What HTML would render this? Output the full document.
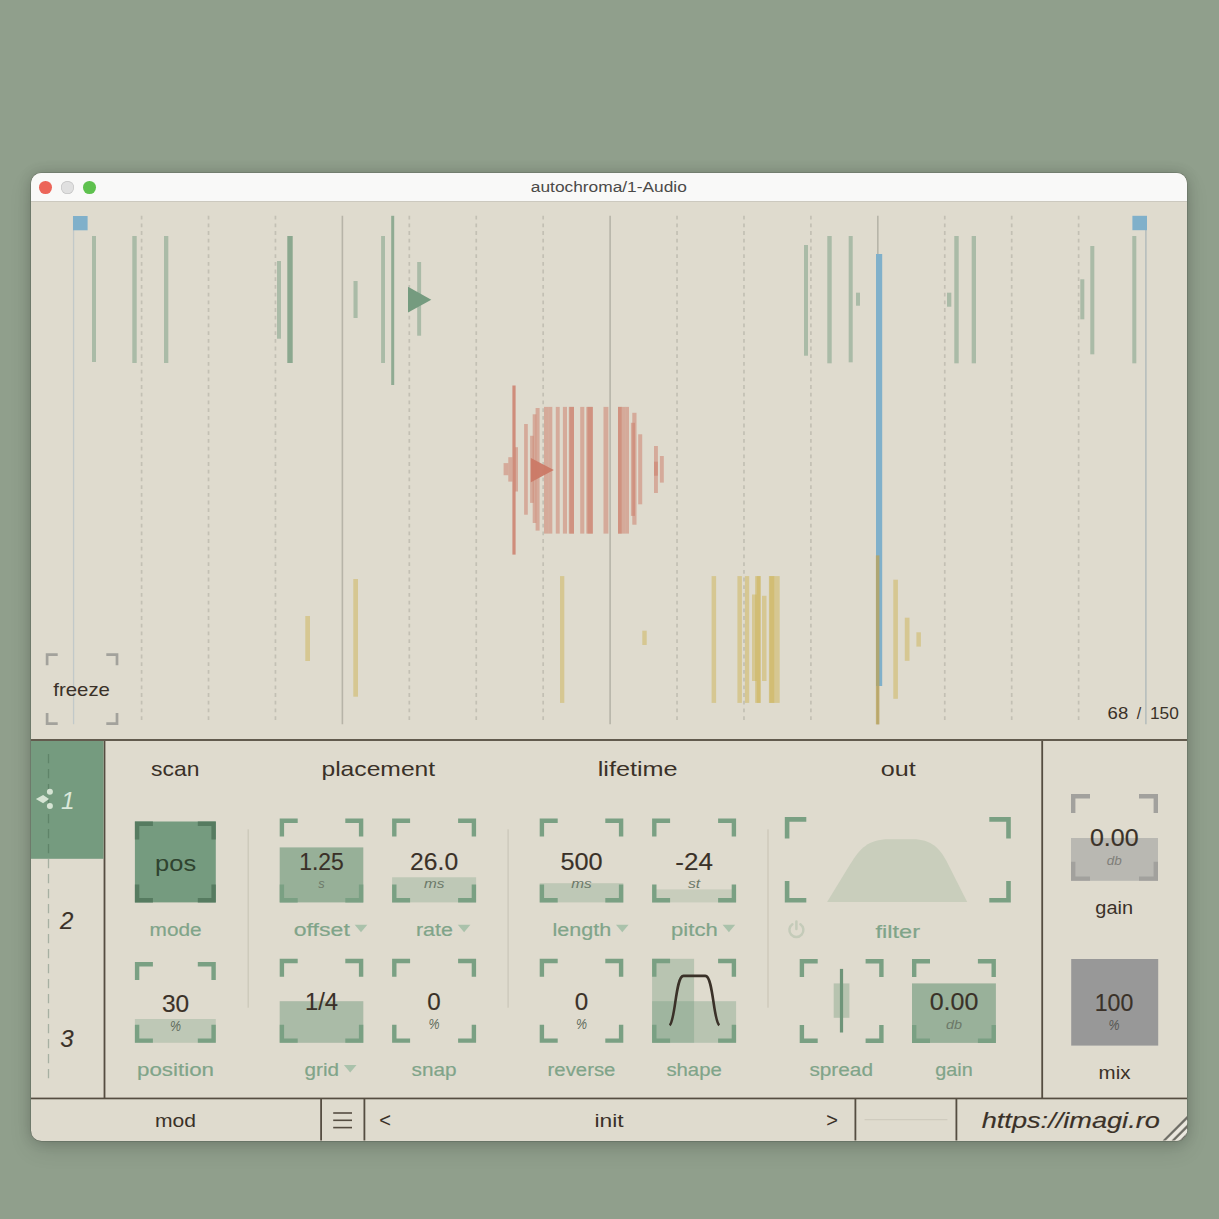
<!DOCTYPE html>
<html lang="en"><head><meta charset="utf-8"><title>autochroma/1-Audio</title>
<style>
html,body{margin:0;padding:0}
body{width:1219px;height:1219px;background:#909f8c;overflow:hidden;position:relative;font-family:"Liberation Sans", sans-serif}
.win{position:absolute;left:31px;top:172.9px;width:1156.2px;height:967.7px;border-radius:10.5px;background:#dfdbce;overflow:hidden;
box-shadow:0 0 0 .5px rgba(0,0,0,.22),0 8px 22px rgba(0,0,0,.13),0 0 13px rgba(0,0,0,.17)}
.bar{position:absolute;left:0;top:0;right:0;height:27.9px;background:#f9f9f8;border-bottom:1.6px solid #ccc9bf}
.dot{position:absolute;top:8.1px;width:12.8px;height:12.8px;border-radius:50%}
svg{position:absolute;left:0;top:0}
svg text{font-family:"Liberation Sans", sans-serif}
</style></head><body>
<div class="win"><div class="bar">
<span class="dot" style="left:7.9px;background:#ec6559"></span>
<span class="dot" style="left:30px;background:#e0e0e0;box-shadow:inset 0 0 0 .7px #c6c6c6"></span>
<span class="dot" style="left:52.4px;background:#5ec14e"></span>
</div></div>
<svg width="1219" height="1219" viewBox="0 0 1219 1219">
<defs><clipPath id="belowtab"><rect x="40" y="858.8" width="20" height="230"/></clipPath>
<clipPath id="win"><rect x="31" y="172.3" width="1156.2" height="968.3" rx="10"/></clipPath></defs>
<text x="608.8" y="192" font-size="15.2" fill="#4b4a48" text-anchor="middle" textLength="156" lengthAdjust="spacingAndGlyphs">autochroma/1-Audio</text>
<line x1="141.6" y1="215.7" x2="141.6" y2="722" stroke="#c3c0b4" stroke-width="1.7" stroke-dasharray="3.8 3.9"/>
<line x1="208.53" y1="215.7" x2="208.53" y2="722" stroke="#c3c0b4" stroke-width="1.7" stroke-dasharray="3.8 3.9"/>
<line x1="275.46000000000004" y1="215.7" x2="275.46000000000004" y2="722" stroke="#c3c0b4" stroke-width="1.7" stroke-dasharray="3.8 3.9"/>
<line x1="342.39" y1="215.7" x2="342.39" y2="724.3" stroke="#b7b4a8" stroke-width="1.6"/>
<line x1="409.32000000000005" y1="215.7" x2="409.32000000000005" y2="722" stroke="#c3c0b4" stroke-width="1.7" stroke-dasharray="3.8 3.9"/>
<line x1="476.25" y1="215.7" x2="476.25" y2="722" stroke="#c3c0b4" stroke-width="1.7" stroke-dasharray="3.8 3.9"/>
<line x1="543.1800000000001" y1="215.7" x2="543.1800000000001" y2="722" stroke="#c3c0b4" stroke-width="1.7" stroke-dasharray="3.8 3.9"/>
<line x1="610.11" y1="215.7" x2="610.11" y2="724.3" stroke="#b7b4a8" stroke-width="1.6"/>
<line x1="677.0400000000001" y1="215.7" x2="677.0400000000001" y2="722" stroke="#c3c0b4" stroke-width="1.7" stroke-dasharray="3.8 3.9"/>
<line x1="743.9700000000001" y1="215.7" x2="743.9700000000001" y2="722" stroke="#c3c0b4" stroke-width="1.7" stroke-dasharray="3.8 3.9"/>
<line x1="810.9000000000001" y1="215.7" x2="810.9000000000001" y2="722" stroke="#c3c0b4" stroke-width="1.7" stroke-dasharray="3.8 3.9"/>
<line x1="877.83" y1="215.7" x2="877.83" y2="724.3" stroke="#b7b4a8" stroke-width="1.6"/>
<line x1="944.7600000000001" y1="215.7" x2="944.7600000000001" y2="722" stroke="#c3c0b4" stroke-width="1.7" stroke-dasharray="3.8 3.9"/>
<line x1="1011.6900000000002" y1="215.7" x2="1011.6900000000002" y2="722" stroke="#c3c0b4" stroke-width="1.7" stroke-dasharray="3.8 3.9"/>
<line x1="1078.6200000000001" y1="215.7" x2="1078.6200000000001" y2="722" stroke="#c3c0b4" stroke-width="1.7" stroke-dasharray="3.8 3.9"/>
<line x1="73.6" y1="216" x2="73.6" y2="724.3" stroke="#c2c9c9" stroke-width="1.3"/>
<line x1="1145.9" y1="216" x2="1145.9" y2="724.3" stroke="#b0babb" stroke-width="1.4"/>
<rect x="73.0" y="216.0" width="14.6" height="14.3" fill="#80b0ca"/>
<rect x="1132.4" y="215.8" width="14.6" height="14.4" fill="#80b0ca"/>
<rect x="92.0" y="236.0" width="4.0" height="126.0" fill="#759b7f" fill-opacity="0.5"/>
<rect x="132.3" y="236.0" width="4.4" height="127.0" fill="#759b7f" fill-opacity="0.5"/>
<rect x="164.0" y="236.0" width="4.3" height="127.0" fill="#759b7f" fill-opacity="0.5"/>
<rect x="277.0" y="261.0" width="4.0" height="77.7" fill="#759b7f" fill-opacity="0.5"/>
<rect x="287.3" y="236.0" width="5.4" height="127.0" fill="#759b7f" fill-opacity="0.8"/>
<rect x="353.5" y="281.0" width="4.1" height="37.0" fill="#759b7f" fill-opacity="0.5"/>
<rect x="381.1" y="236.0" width="3.9" height="127.0" fill="#759b7f" fill-opacity="0.5"/>
<rect x="391.2" y="215.8" width="3.0" height="169.2" fill="#759b7f" fill-opacity="0.75"/>
<rect x="417.2" y="262.0" width="3.9" height="73.7" fill="#759b7f" fill-opacity="0.5"/>
<rect x="804.0" y="245.0" width="4.0" height="110.7" fill="#759b7f" fill-opacity="0.5"/>
<rect x="827.3" y="236.0" width="4.4" height="127.3" fill="#759b7f" fill-opacity="0.5"/>
<rect x="848.7" y="236.0" width="4.0" height="126.3" fill="#759b7f" fill-opacity="0.5"/>
<rect x="856.0" y="292.7" width="4.0" height="13.0" fill="#759b7f" fill-opacity="0.5"/>
<rect x="947.0" y="292.7" width="4.3" height="14.0" fill="#759b7f" fill-opacity="0.5"/>
<rect x="954.3" y="236.0" width="4.4" height="127.3" fill="#759b7f" fill-opacity="0.5"/>
<rect x="971.7" y="236.0" width="4.3" height="127.3" fill="#759b7f" fill-opacity="0.5"/>
<rect x="1080.3" y="279.3" width="4.0" height="40.0" fill="#759b7f" fill-opacity="0.5"/>
<rect x="1090.3" y="246.0" width="4.0" height="108.3" fill="#759b7f" fill-opacity="0.5"/>
<rect x="1132.3" y="236.0" width="4.0" height="127.3" fill="#759b7f" fill-opacity="0.5"/>
<path d="M408 286.8L431.3 299.8L408 312.6z" fill="#759b7f"/>
<rect x="876.0" y="254.0" width="6.2" height="432.0" fill="#80b0ca"/>
<rect x="512.4" y="385.5" width="3.2" height="169.1" fill="#cb7966" fill-opacity="0.8"/>
<rect x="503.6" y="463.1" width="4.7" height="12.1" fill="#cb7966" fill-opacity="0.5"/>
<rect x="508.3" y="457.2" width="4.1" height="24.4" fill="#cb7966" fill-opacity="0.5"/>
<rect x="515.0" y="447.2" width="3.0" height="44.3" fill="#cb7966" fill-opacity="0.5"/>
<rect x="524.1" y="424.0" width="3.7" height="90.7" fill="#cb7966" fill-opacity="0.5"/>
<rect x="530.1" y="435.8" width="3.6" height="67.1" fill="#cb7966" fill-opacity="0.5"/>
<rect x="532.7" y="414.3" width="3.6" height="108.7" fill="#cb7966" fill-opacity="0.5"/>
<rect x="535.6" y="408.0" width="4.0" height="122.6" fill="#cb7966" fill-opacity="0.5"/>
<rect x="544.0" y="406.9" width="4.2" height="126.7" fill="#cb7966" fill-opacity="0.5"/>
<rect x="548.2" y="406.9" width="4.1" height="126.7" fill="#cb7966" fill-opacity="0.5"/>
<rect x="555.8" y="406.9" width="3.9" height="126.7" fill="#cb7966" fill-opacity="0.5"/>
<rect x="562.9" y="406.9" width="4.1" height="126.7" fill="#cb7966" fill-opacity="0.5"/>
<rect x="568.8" y="406.9" width="5.2" height="126.7" fill="#cb7966" fill-opacity="0.5"/>
<rect x="569.5" y="406.9" width="4.5" height="126.7" fill="#cb7966" fill-opacity="0.5"/>
<rect x="580.2" y="406.9" width="4.1" height="126.7" fill="#cb7966" fill-opacity="0.5"/>
<rect x="586.3" y="406.9" width="6.5" height="126.7" fill="#cb7966" fill-opacity="0.5"/>
<rect x="587.5" y="406.9" width="5.3" height="126.7" fill="#cb7966" fill-opacity="0.5"/>
<rect x="603.5" y="406.9" width="4.9" height="126.7" fill="#cb7966" fill-opacity="0.5"/>
<rect x="618.0" y="406.9" width="3.7" height="126.7" fill="#cb7966" fill-opacity="0.5"/>
<rect x="618.0" y="406.9" width="3.7" height="126.7" fill="#cb7966" fill-opacity="0.5"/>
<rect x="621.7" y="406.9" width="4.0" height="126.7" fill="#cb7966" fill-opacity="0.5"/>
<rect x="625.7" y="406.9" width="3.3" height="126.7" fill="#cb7966" fill-opacity="0.5"/>
<rect x="630.9" y="422.8" width="4.1" height="93.1" fill="#cb7966" fill-opacity="0.5"/>
<rect x="632.3" y="412.8" width="4.2" height="111.9" fill="#cb7966" fill-opacity="0.5"/>
<rect x="638.2" y="434.3" width="4.0" height="70.0" fill="#cb7966" fill-opacity="0.5"/>
<rect x="654.0" y="446.0" width="3.9" height="47.0" fill="#cb7966" fill-opacity="0.5"/>
<rect x="654.0" y="461.7" width="3.9" height="14.0" fill="#cb7966" fill-opacity="0.5"/>
<rect x="659.9" y="456.0" width="3.9" height="26.6" fill="#cb7966" fill-opacity="0.5"/>
<path d="M530.9 458L553.8 470L530.9 482.2z" fill="#cb7966" fill-opacity=".95"/>
<rect x="305.3" y="616.0" width="4.7" height="45.0" fill="#cdb355" fill-opacity="0.5"/>
<rect x="353.3" y="579.0" width="4.7" height="117.7" fill="#cdb355" fill-opacity="0.5"/>
<rect x="560.0" y="576.1" width="4.3" height="126.8" fill="#cdb355" fill-opacity="0.5"/>
<rect x="642.3" y="630.7" width="4.4" height="14.3" fill="#cdb355" fill-opacity="0.5"/>
<rect x="711.6" y="576.1" width="4.5" height="126.8" fill="#cdb355" fill-opacity="0.5"/>
<rect x="737.4" y="576.1" width="4.5" height="126.8" fill="#cdb355" fill-opacity="0.5"/>
<rect x="744.9" y="576.1" width="4.3" height="126.8" fill="#cdb355" fill-opacity="0.5"/>
<rect x="752.0" y="594.5" width="4.7" height="86.5" fill="#cdb355" fill-opacity="0.5"/>
<rect x="755.1" y="576.1" width="5.5" height="126.8" fill="#cdb355" fill-opacity="0.5"/>
<rect x="756.7" y="576.1" width="3.9" height="126.8" fill="#cdb355" fill-opacity="0.5"/>
<rect x="762.0" y="595.8" width="4.5" height="85.2" fill="#cdb355" fill-opacity="0.5"/>
<rect x="768.9" y="576.1" width="5.5" height="126.8" fill="#cdb355" fill-opacity="0.5"/>
<rect x="769.5" y="576.1" width="4.9" height="126.8" fill="#cdb355" fill-opacity="0.5"/>
<rect x="774.4" y="576.1" width="5.3" height="126.8" fill="#cdb355" fill-opacity="0.5"/>
<rect x="893.3" y="579.7" width="4.6" height="119.1" fill="#cdb355" fill-opacity="0.5"/>
<rect x="904.8" y="617.7" width="4.7" height="43.1" fill="#cdb355" fill-opacity="0.5"/>
<rect x="916.4" y="632.3" width="4.5" height="14.3" fill="#cdb355" fill-opacity="0.5"/>
<rect x="875.9" y="555.4" width="3.5" height="169.0" fill="#b9a45c" fill-opacity="0.8"/>
<path d="M47.1 665.3V654.6H57.7M106.3 654.6H117.0V665.3M117.0 713.0V723.6H106.3M57.7 723.6H47.1V713.0" fill="none" stroke="#a3a29c" stroke-width="2.7" stroke-linecap="butt" stroke-linejoin="miter"/>
<text x="81.6" y="696.0" font-size="19" fill="#3a3128" text-anchor="middle" textLength="56.7" lengthAdjust="spacingAndGlyphs">freeze</text>
<text y="719" font-size="16" fill="#3a3128"><tspan x="1107.6" textLength="20.6" lengthAdjust="spacingAndGlyphs">68</tspan><tspan x="1132.2"> / </tspan><tspan x="1150" textLength="28.8" lengthAdjust="spacingAndGlyphs">150</tspan></text>
<rect x="31.0" y="739.1" width="1156.0" height="1.8" fill="#554d41"/>
<rect x="31.0" y="1097.6" width="1156.0" height="1.7" fill="#554d41"/>
<rect x="103.6" y="741.0" width="1.8" height="357.0" fill="#554d41"/>
<rect x="1041.3" y="741.0" width="1.8" height="357.0" fill="#554d41"/>
<rect x="320.2" y="1099.0" width="1.8" height="41.5" fill="#554d41"/>
<rect x="363.5" y="1099.0" width="1.8" height="41.5" fill="#554d41"/>
<rect x="854.5" y="1099.0" width="1.8" height="41.5" fill="#554d41"/>
<rect x="955.5" y="1099.0" width="1.8" height="41.5" fill="#554d41"/>
<rect x="31.0" y="741.0" width="72.5" height="117.8" fill="#759b7f"/>
<line x1="48.5" y1="754" x2="48.5" y2="858.8" stroke="#5f8469" stroke-width="1.3" stroke-dasharray="9.3 5.7"/>
<line x1="48.5" y1="754" x2="48.5" y2="1078.8" stroke="#a7b0a2" stroke-width="1.3" stroke-dasharray="9.3 5.7" clip-path="url(#belowtab)"/>
<path d="M35.9 799L43.1 795L49 799L43.1 803.2z" fill="#d6e4d4"/><circle cx="49.9" cy="791.7" r="3" fill="#d6e4d4"/><circle cx="49.9" cy="805.9" r="3" fill="#d6e4d4"/>
<text x="67.8" y="808.6" font-size="24.5" fill="#dbe8da" text-anchor="middle" font-style="italic">1</text>
<text x="66.7" y="928.8" font-size="24" fill="#3a3128" text-anchor="middle" font-style="italic" stroke="#3a3128" stroke-width="0.15">2</text>
<text x="66.9" y="1047.2" font-size="24" fill="#3a3128" text-anchor="middle" font-style="italic" stroke="#3a3128" stroke-width="0.15">3</text>
<text x="175.2" y="776.0" font-size="21" fill="#3a3128" text-anchor="middle" textLength="48.4" lengthAdjust="spacingAndGlyphs">scan</text>
<text x="378.3" y="776.0" font-size="21" fill="#3a3128" text-anchor="middle" textLength="113.7" lengthAdjust="spacingAndGlyphs">placement</text>
<text x="637.7" y="776.0" font-size="21" fill="#3a3128" text-anchor="middle" textLength="80.0" lengthAdjust="spacingAndGlyphs">lifetime</text>
<text x="898.2" y="776.0" font-size="21" fill="#3a3128" text-anchor="middle" textLength="35.0" lengthAdjust="spacingAndGlyphs">out</text>
<rect x="247.5" y="829.3" width="1.4" height="178.4" fill="#cdc9bb"/>
<rect x="507.4" y="829.3" width="1.4" height="178.4" fill="#cdc9bb"/>
<rect x="767.3" y="829.3" width="1.4" height="178.4" fill="#cdc9bb"/>
<rect x="134.9" y="821.5" width="80.9" height="80.9" fill="#759b7f"/>
<path d="M137.1 839.5V823.7H152.9M197.8 823.7H213.6V839.5M213.6 884.4V900.2H197.8M152.9 900.2H137.1V884.4" fill="none" stroke="#567b60" stroke-width="4.4" stroke-linecap="butt" stroke-linejoin="miter"/>
<text x="175.6" y="871.3" font-size="22.3" fill="#2f432f" text-anchor="middle" textLength="41.0" lengthAdjust="spacingAndGlyphs">pos</text>
<text x="175.6" y="936.3" font-size="19.1" fill="#80a489" text-anchor="middle" textLength="52.0" lengthAdjust="spacingAndGlyphs" stroke="#80a489" stroke-width="0.2">mode</text>
<rect x="134.9" y="1019.0" width="80.9" height="23.8" fill="#759b7f" fill-opacity="0.3"/>
<path d="M137.1 980.0V964.2H152.9M197.8 964.2H213.6V980.0M213.6 1024.8V1040.6H197.8M152.9 1040.6H137.1V1024.8" fill="none" stroke="#7aa083" stroke-width="4.4" stroke-linecap="butt" stroke-linejoin="miter"/>
<text x="175.5" y="1011.5" font-size="24.2" fill="#3a3128" text-anchor="middle" textLength="27.2" lengthAdjust="spacingAndGlyphs" stroke="#3a3128" stroke-width="0.15">30</text>
<text x="175.5" y="1030.6" font-size="14.6" fill="#5f6b5c" text-anchor="middle" textLength="11.0" lengthAdjust="spacingAndGlyphs" font-style="italic">%</text>
<text x="175.5" y="1076.3" font-size="19.1" fill="#80a489" text-anchor="middle" textLength="77.0" lengthAdjust="spacingAndGlyphs" stroke="#80a489" stroke-width="0.2">position</text>
<rect x="279.7" y="847.4" width="83.6" height="55.0" fill="#759b7f" fill-opacity="0.68"/>
<path d="M281.9 836.6V820.8H297.7M345.3 820.8H361.1V836.6M361.1 884.4V900.2H345.3M297.7 900.2H281.9V884.4" fill="none" stroke="#7aa083" stroke-width="4.4" stroke-linecap="butt" stroke-linejoin="miter"/>
<text x="321.5" y="869.8" font-size="24.2" fill="#3a3128" text-anchor="middle" textLength="44.6" lengthAdjust="spacingAndGlyphs" stroke="#3a3128" stroke-width="0.15">1.25</text>
<text x="321.5" y="887.6" font-size="13.5" fill="#6c7969" text-anchor="middle" textLength="6.4" lengthAdjust="spacingAndGlyphs" font-style="italic">s</text>
<text x="321.8" y="936.1" font-size="19.1" fill="#80a489" text-anchor="middle" textLength="56.0" lengthAdjust="spacingAndGlyphs" stroke="#80a489" stroke-width="0.2">offset</text>
<path d="M354.7 924.8h12.6l-6.3 7.4z" fill="#aac2ab"/>
<rect x="392.1" y="877.3" width="84.0" height="25.1" fill="#759b7f" fill-opacity="0.3"/>
<path d="M394.3 836.6V820.8H410.1M458.1 820.8H473.9V836.6M473.9 884.4V900.2H458.1M410.1 900.2H394.3V884.4" fill="none" stroke="#7aa083" stroke-width="4.4" stroke-linecap="butt" stroke-linejoin="miter"/>
<text x="434.1" y="869.8" font-size="24.2" fill="#3a3128" text-anchor="middle" textLength="48.0" lengthAdjust="spacingAndGlyphs" stroke="#3a3128" stroke-width="0.15">26.0</text>
<text x="434.1" y="887.6" font-size="13.5" fill="#6c7969" text-anchor="middle" textLength="20.4" lengthAdjust="spacingAndGlyphs" font-style="italic">ms</text>
<text x="434.4" y="936.1" font-size="19.1" fill="#80a489" text-anchor="middle" textLength="37.0" lengthAdjust="spacingAndGlyphs" stroke="#80a489" stroke-width="0.2">rate</text>
<path d="M457.8 924.8h12.6l-6.3 7.4z" fill="#aac2ab"/>
<rect x="279.7" y="1001.2" width="83.6" height="41.6" fill="#759b7f" fill-opacity="0.5"/>
<path d="M281.9 976.8V961.0H297.7M345.3 961.0H361.1V976.8M361.1 1024.8V1040.6H345.3M297.7 1040.6H281.9V1024.8" fill="none" stroke="#7aa083" stroke-width="4.4" stroke-linecap="butt" stroke-linejoin="miter"/>
<text x="321.5" y="1010.0" font-size="24.2" fill="#3a3128" text-anchor="middle" textLength="33.0" lengthAdjust="spacingAndGlyphs" stroke="#3a3128" stroke-width="0.15">1/4</text>
<text x="321.8" y="1076.3" font-size="19.1" fill="#80a489" text-anchor="middle" textLength="34.5" lengthAdjust="spacingAndGlyphs" stroke="#80a489" stroke-width="0.2">grid</text>
<path d="M343.9 1065.0h12.6l-6.3 7.4z" fill="#aac2ab"/>
<path d="M394.3 976.8V961.0H410.1M458.1 961.0H473.9V976.8M473.9 1024.8V1040.6H458.1M410.1 1040.6H394.3V1024.8" fill="none" stroke="#7aa083" stroke-width="4.4" stroke-linecap="butt" stroke-linejoin="miter"/>
<text x="434.1" y="1010.0" font-size="24.2" fill="#3a3128" text-anchor="middle" stroke="#3a3128" stroke-width="0.15">0</text>
<text x="434.1" y="1029.1" font-size="14.6" fill="#5f6b5c" text-anchor="middle" textLength="11.0" lengthAdjust="spacingAndGlyphs" font-style="italic">%</text>
<text x="434.1" y="1076.3" font-size="19.1" fill="#80a489" text-anchor="middle" textLength="45.0" lengthAdjust="spacingAndGlyphs" stroke="#80a489" stroke-width="0.2">snap</text>
<rect x="539.7" y="883.2" width="83.6" height="19.2" fill="#759b7f" fill-opacity="0.3"/>
<path d="M541.9 836.6V820.8H557.7M605.3 820.8H621.1V836.6M621.1 884.4V900.2H605.3M557.7 900.2H541.9V884.4" fill="none" stroke="#7aa083" stroke-width="4.4" stroke-linecap="butt" stroke-linejoin="miter"/>
<text x="581.5" y="869.8" font-size="24.2" fill="#3a3128" text-anchor="middle" textLength="42.2" lengthAdjust="spacingAndGlyphs" stroke="#3a3128" stroke-width="0.15">500</text>
<text x="581.5" y="887.6" font-size="13.5" fill="#6c7969" text-anchor="middle" textLength="20.4" lengthAdjust="spacingAndGlyphs" font-style="italic">ms</text>
<text x="581.8" y="936.1" font-size="19.1" fill="#80a489" text-anchor="middle" textLength="58.7" lengthAdjust="spacingAndGlyphs" stroke="#80a489" stroke-width="0.2">length</text>
<path d="M616.0 924.8h12.6l-6.3 7.4z" fill="#aac2ab"/>
<rect x="652.1" y="889.4" width="84.0" height="13.0" fill="#759b7f" fill-opacity="0.22"/>
<path d="M654.3 836.6V820.8H670.1M718.1 820.8H733.9V836.6M733.9 884.4V900.2H718.1M670.1 900.2H654.3V884.4" fill="none" stroke="#7aa083" stroke-width="4.4" stroke-linecap="butt" stroke-linejoin="miter"/>
<text x="694.1" y="869.8" font-size="24.2" fill="#3a3128" text-anchor="middle" textLength="37.6" lengthAdjust="spacingAndGlyphs" stroke="#3a3128" stroke-width="0.15">-24</text>
<text x="694.1" y="887.6" font-size="13.5" fill="#6c7969" text-anchor="middle" textLength="12.2" lengthAdjust="spacingAndGlyphs" font-style="italic">st</text>
<text x="694.4" y="936.1" font-size="19.1" fill="#80a489" text-anchor="middle" textLength="46.6" lengthAdjust="spacingAndGlyphs" stroke="#80a489" stroke-width="0.2">pitch</text>
<path d="M722.6 924.8h12.6l-6.3 7.4z" fill="#aac2ab"/>
<path d="M541.9 976.8V961.0H557.7M605.3 961.0H621.1V976.8M621.1 1024.8V1040.6H605.3M557.7 1040.6H541.9V1024.8" fill="none" stroke="#7aa083" stroke-width="4.4" stroke-linecap="butt" stroke-linejoin="miter"/>
<text x="581.5" y="1010.0" font-size="24.2" fill="#3a3128" text-anchor="middle" stroke="#3a3128" stroke-width="0.15">0</text>
<text x="581.5" y="1029.1" font-size="14.6" fill="#5f6b5c" text-anchor="middle" textLength="11.0" lengthAdjust="spacingAndGlyphs" font-style="italic">%</text>
<text x="581.5" y="1076.3" font-size="19.1" fill="#80a489" text-anchor="middle" textLength="67.8" lengthAdjust="spacingAndGlyphs" stroke="#80a489" stroke-width="0.2">reverse</text>
<rect x="652.1" y="958.8" width="42.0" height="84.0" fill="#759b7f" fill-opacity="0.36"/>
<rect x="652.1" y="1001.2" width="84.0" height="41.6" fill="#759b7f" fill-opacity="0.36"/>
<path d="M654.3 976.8V961.0H670.1M718.1 961.0H733.9V976.8M733.9 1024.8V1040.6H718.1M670.1 1040.6H654.3V1024.8" fill="none" stroke="#7aa083" stroke-width="4.4" stroke-linecap="butt" stroke-linejoin="miter"/>
<text x="694.1" y="1076.3" font-size="19.1" fill="#80a489" text-anchor="middle" textLength="55.4" lengthAdjust="spacingAndGlyphs" stroke="#80a489" stroke-width="0.2">shape</text>
<path d="M669.6 1025.3C675.5 1021 675.5 975.9 683.5 975.9H705.3C713.3 975.9 713.3 1021 719.3 1025.3" fill="none" stroke="#3a3128" stroke-width="2.6"/>
<path d="M787.1 838.6V819.4H806.3M989.3 819.4H1008.5V838.6M1008.5 881.1V900.3H989.3M806.3 900.3H787.1V881.1" fill="none" stroke="#7aa083" stroke-width="4.6" stroke-linecap="butt" stroke-linejoin="miter"/>
<path d="M827.1 901.9L850 864.5C860 848.5 868 839.2 889 839.2H913C931 839.2 939.5 848 946.5 861L967.2 901.9z" fill="#c9cebc"/>
<text x="897.8" y="938.0" font-size="19.1" fill="#80a489" text-anchor="middle" textLength="44.6" lengthAdjust="spacingAndGlyphs" stroke="#80a489" stroke-width="0.2">filter</text>
<g fill="none" stroke="#c4cbb9" stroke-width="2.5" stroke-linecap="round"><path d="M792.4 924.3A7 7 0 1 0 800.4 924.3"/><path d="M796.4 921.4V929"/></g>
<path d="M801.9 977.0V961.2H817.7M865.6 961.2H881.4V977.0M881.4 1024.9V1040.7H865.6M817.7 1040.7H801.9V1024.9" fill="none" stroke="#7aa083" stroke-width="4.4" stroke-linecap="butt" stroke-linejoin="miter"/>
<rect x="833.7" y="983.4" width="15.7" height="34.4" fill="#759b7f" fill-opacity="0.38"/>
<rect x="839.9" y="968.9" width="3.2" height="63.6" fill="#6f9579"/>
<text x="841.2" y="1076.3" font-size="19.1" fill="#80a489" text-anchor="middle" textLength="63.6" lengthAdjust="spacingAndGlyphs" stroke="#80a489" stroke-width="0.2">spread</text>
<rect x="912.0" y="983.4" width="83.9" height="59.5" fill="#759b7f" fill-opacity="0.66"/>
<path d="M914.2 977.0V961.2H930.0M977.9 961.2H993.7V977.0M993.7 1024.9V1040.7H977.9M930.0 1040.7H914.2V1024.9" fill="none" stroke="#7aa083" stroke-width="4.4" stroke-linecap="butt" stroke-linejoin="miter"/>
<text x="954.0" y="1010.2" font-size="24.2" fill="#3a3128" text-anchor="middle" textLength="48.7" lengthAdjust="spacingAndGlyphs" stroke="#3a3128" stroke-width="0.15">0.00</text>
<text x="954.0" y="1028.6" font-size="13.5" fill="#6c7969" text-anchor="middle" textLength="16.0" lengthAdjust="spacingAndGlyphs" font-style="italic">db</text>
<text x="954.0" y="1076.3" font-size="19.1" fill="#80a489" text-anchor="middle" textLength="37.4" lengthAdjust="spacingAndGlyphs" stroke="#80a489" stroke-width="0.2">gain</text>
<rect x="1071.0" y="838.0" width="87.0" height="42.8" fill="#b9b8b2"/>
<path d="M1073.2 813.1V796.3H1090.0M1139.0 796.3H1155.8V813.1M1155.8 861.8V878.6H1139.0M1090.0 878.6H1073.2V861.8" fill="none" stroke="#a2a19d" stroke-width="4.4" stroke-linecap="butt" stroke-linejoin="miter"/>
<text x="1114.3" y="846.2" font-size="24.2" fill="#3a3128" text-anchor="middle" textLength="48.7" lengthAdjust="spacingAndGlyphs" stroke="#3a3128" stroke-width="0.15">0.00</text>
<text x="1114.3" y="864.8" font-size="13.5" fill="#807f7a" text-anchor="middle" font-style="italic">db</text>
<text x="1114.2" y="914.0" font-size="19.1" fill="#3a3128" text-anchor="middle" textLength="37.7" lengthAdjust="spacingAndGlyphs">gain</text>
<rect x="1071.2" y="959.0" width="87.0" height="86.6" fill="#989898"/>
<text x="1114.0" y="1011.4" font-size="24.2" fill="#3a3128" text-anchor="middle" textLength="38.6" lengthAdjust="spacingAndGlyphs" stroke="#3a3128" stroke-width="0.15">100</text>
<text x="1114.0" y="1030.0" font-size="14.6" fill="#565653" text-anchor="middle" textLength="11.0" lengthAdjust="spacingAndGlyphs" font-style="italic">%</text>
<text x="1114.5" y="1079.0" font-size="19.1" fill="#3a3128" text-anchor="middle" textLength="31.9" lengthAdjust="spacingAndGlyphs">mix</text>
<text x="175.4" y="1126.6" font-size="19.1" fill="#3a3128" text-anchor="middle" textLength="41.0" lengthAdjust="spacingAndGlyphs">mod</text>
<rect x="333.2" y="1112.2" width="18.8" height="1.6" fill="#554d41"/>
<rect x="333.2" y="1119.5" width="18.8" height="1.6" fill="#554d41"/>
<rect x="333.2" y="1126.8" width="18.8" height="1.6" fill="#554d41"/>
<text x="385.0" y="1127.2" font-size="20" fill="#3a3128" text-anchor="middle">&lt;</text>
<text x="832.0" y="1127.2" font-size="20" fill="#3a3128" text-anchor="middle">&gt;</text>
<text x="609.0" y="1126.6" font-size="19.1" fill="#3a3128" text-anchor="middle" textLength="29.2" lengthAdjust="spacingAndGlyphs">init</text>
<rect x="864.6" y="1119.2" width="82.8" height="1.0" fill="#cbc7ba"/>
<text x="1070.8" y="1127.8" font-size="22.6" fill="#3a3128" text-anchor="middle" textLength="178.2" lengthAdjust="spacingAndGlyphs" font-style="italic" stroke="#3a3128" stroke-width="0.15">https://imagi.ro</text>
<g stroke="#6f6e67" stroke-width="2.2" clip-path="url(#win)"><path d="M1163.4 1141.2L1188 1116.6M1172.4 1141.2L1188 1125.6M1180.4 1141.2L1188 1133.6"/><path d="M1167.9 1141.2L1188 1121.1M1176.6 1141.2L1188 1129.8" stroke="#ebe8e0" stroke-width="2.6"/></g>
</svg>
</body></html>
